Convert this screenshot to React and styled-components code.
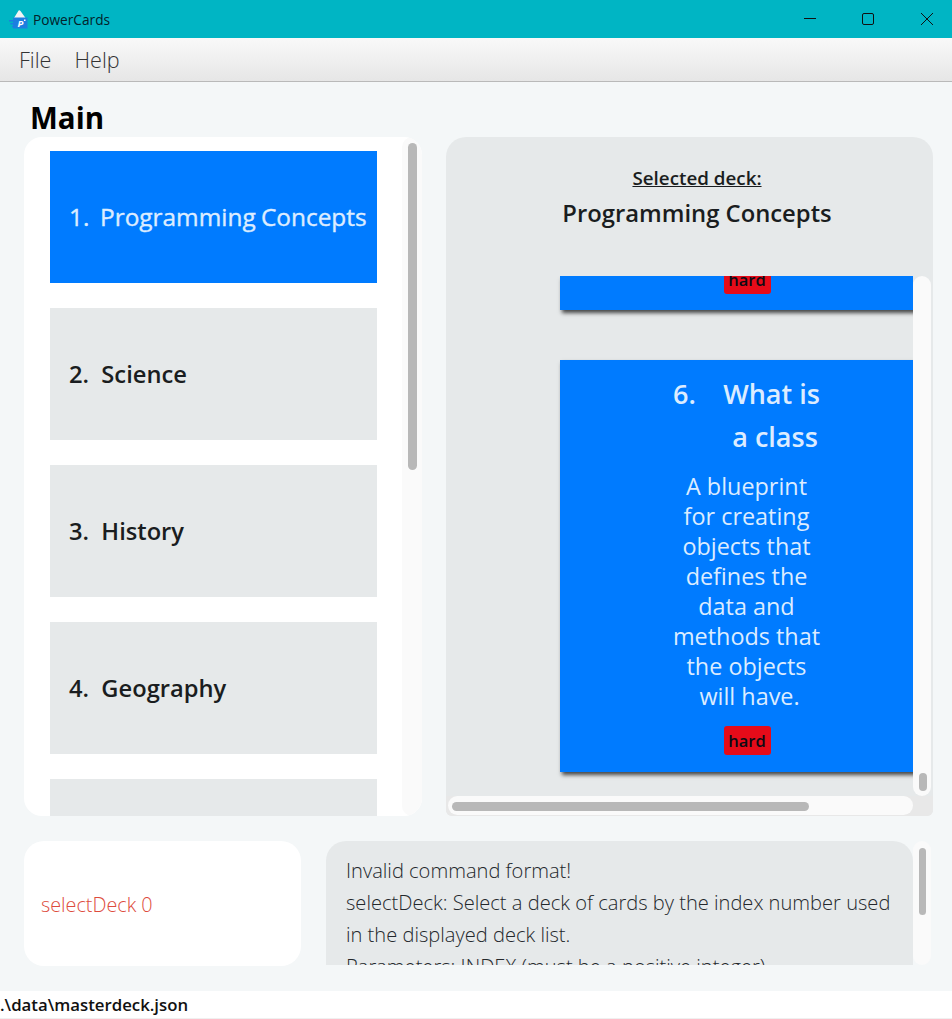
import React from "react";
import styled, { createGlobalStyle } from "styled-components";

const GlobalStyle = createGlobalStyle`
  html, body {
    margin: 0;
    padding: 0;
    background: #f4f7f8;
  }
  * {
    box-sizing: border-box;
  }
`;

const Window = styled.div`
  width: 952px;
  height: 1019px;
  display: flex;
  flex-direction: column;
  overflow: hidden;
  background: #f4f7f8;
  font-family: "Open Sans", "Noto Sans", sans-serif;
  color: #212529;
`;

const TitleBar = styled.div`
  height: 38px;
  flex: none;
  display: flex;
  align-items: center;
  background: #00b5c4;
  padding-left: 9px;
`;

const AppName = styled.span`
  margin-left: 5px;
  font-size: 13.7px;
  color: #04222a;
`;

const WindowButtons = styled.div`
  margin-left: auto;
  margin-right: -4px;
  display: flex;
`;

const WindowButton = styled.div`
  width: 58.5px;
  height: 38px;
  display: flex;
  align-items: center;
  justify-content: center;
`;

const MenuBar = styled.div`
  height: 44px;
  flex: none;
  display: flex;
  align-items: center;
  gap: 23px;
  padding: 0 0 1px 19px;
  background: linear-gradient(#f9f9f9, #e6e6e6);
  border-bottom: 1px solid #b9b9b9;
`;

const MenuItem = styled.span`
  font-size: 21.6px;
  font-weight: 300;
  color: #333;
`;

const Content = styled.div`
  flex: 1;
  display: flex;
  flex-direction: column;
  padding: 0 19px 0 24px;
`;

const Heading = styled.h1`
  margin: 0;
  height: 55px;
  padding: 14px 0 0 6px;
  font-size: 29.5px;
  line-height: 44px;
  font-weight: 700;
  color: #000;
`;

const Panels = styled.div`
  height: 679px;
  flex: none;
  display: flex;
  gap: 24px;
`;

const ListPanel = styled.div`
  width: 398px;
  display: flex;
  background: #fff;
  border-radius: 18px;
  overflow: hidden;
`;

const DeckList = styled.div`
  flex: 1;
  display: flex;
  flex-direction: column;
  gap: 25px;
  padding: 14px 0 0 26px;
  overflow: hidden;
`;

const DeckItem = styled.div`
  width: 327px;
  height: 132px;
  flex: none;
  display: flex;
  align-items: center;
  padding: 0 0 ${(p) => (p.$selected ? 2 : 0)}px 19px;
  font-size: ${(p) => (p.$selected ? 24.4 : 23.7)}px;
  font-weight: ${(p) => (p.$selected ? 400 : 600)};
  word-spacing: ${(p) => (p.$selected ? -1 : 0)}px;
  -webkit-text-stroke: ${(p) => (p.$selected ? "0.4px #dcecff" : "0")};
  white-space: pre;
  background: ${(p) => (p.$selected ? "#007bff" : "#e6e9ea")};
  color: ${(p) => (p.$selected ? "#dcecff" : "#1a1d20")};
`;

const VTrack = styled.div`
  flex: none;
  width: ${(p) => p.$width || 20}px;
  display: flex;
  flex-direction: column;
  justify-content: ${(p) => (p.$end ? "flex-end" : "flex-start")};
  padding: ${(p) => p.$padding || "6px 5px 6px 6px"};
  background: #fafafa;
  border-radius: 10px;
`;

const VThumb = styled.div`
  width: 100%;
  height: ${(p) => p.$size}px;
  background: #b8b8b8;
  border-radius: 5px;
`;

const DetailPanel = styled.div`
  width: 487px;
  display: flex;
  flex-direction: column;
  background: #e6e9ea;
  border-radius: 20px 20px 6px 6px;
  overflow: hidden;
`;

const DetailHeader = styled.div`
  height: 139px;
  flex: none;
  padding: 29px 0 0 15px;
  text-align: center;
  color: #1a1d20;
`;

const SelectedLabel = styled.div`
  font-size: 18.8px;
  line-height: 24px;
  font-weight: 600;
  text-decoration: underline;
`;

const SelectedName = styled.div`
  margin-top: 7px;
  font-size: 23.8px;
  line-height: 32px;
  font-weight: 600;
`;

const CardsRow = styled.div`
  height: 520px;
  flex: none;
  display: flex;
`;

const CardsViewport = styled.div`
  width: 467px;
  display: flex;
  flex-direction: column;
  gap: 50px;
  padding-left: 114px;
  overflow: hidden;
`;

const Card = styled.div`
  width: 374px;
  flex: none;
  display: flex;
  flex-direction: column;
  align-items: center;
  background: #007bff;
  box-shadow: 2px 3px 4px rgba(0, 0, 0, 0.7);
  color: #dcecff;
`;

const CardStub = styled(Card)`
  height: 34px;
  justify-content: flex-end;
  padding-bottom: 16px;
`;

const FullCard = styled(Card)`
  height: 412px;
  padding-top: 12px;
`;

const CardTitle = styled.div`
  width: 147px;
  margin-left: -1px;
  display: grid;
  grid-template-columns: 50px 97px;
  font-size: 27px;
  line-height: 43px;
  font-weight: 600;
`;

const CardNumber = styled.span`
  font-weight: 600;
`;

const CardQuestion = styled.span`
  text-align: center;
  white-space: pre;
`;

const CardAnswer = styled.div`
  margin: 13px 1px 0 0;
  font-size: 23.4px;
  line-height: 30px;
  font-weight: 400;
  text-align: center;
  white-space: pre;
`;

const DifficultyBadge = styled.span`
  flex: none;
  width: 47px;
  height: 29px;
  margin-top: ${(p) => p.$top || 0}px;
  display: flex;
  align-items: center;
  justify-content: center;
  background: #e60b19;
  border-radius: 3px;
  color: #0c0c14;
  font-size: 16.5px;
  font-weight: 600;
`;

const ScrollFooter = styled.div`
  height: 20px;
  flex: none;
  display: flex;
  padding-left: 2px;
  background: #e8e8e8;
  margin-bottom: 1px;
`;

const HTrack = styled.div`
  width: 465px;
  height: 19px;
  padding: 6px 104px 4px 4px;
  background: #fafafa;
  border-radius: 10px;
`;

const HThumb = styled.div`
  height: 100%;
  background: #b8b8b8;
  border-radius: 5px;
`;

const BottomRow = styled.div`
  margin-top: 25px;
  height: 125px;
  flex: none;
  display: flex;
  gap: 25px;
`;

const CommandBox = styled.div`
  width: 277px;
  display: flex;
  align-items: center;
  padding: 2px 0 0 17px;
  background: #fff;
  border-radius: 20px;
  color: #dd4b3c;
  font-size: 19.8px;
  font-weight: 300;
`;

const ResultRow = styled.div`
  height: 124px;
  display: flex;
`;

const ResultBox = styled.div`
  width: 587px;
  padding: 14px 10px 0 20px;
  background: #e6e9ea;
  border-radius: 20px 20px 0 0;
  overflow: hidden;
  font-size: 20.1px;
  line-height: 32px;
  font-weight: 300;
  color: #24282c;
  white-space: pre;
`;

const StatusBar = styled.div`
  margin-top: auto;
  height: 28px;
  flex: none;
  display: flex;
  align-items: center;
  background: #fff;
  border-bottom: 1px solid #f0f0f0;
  font-size: 16.8px;
  font-weight: 600;
  color: #111;
  white-space: pre;
`;

const decks = [
  "1.  Programming Concepts",
  "2.  Science",
  "3.  History",
  "4.  Geography",
  "",
];

const answer = [
  "A blueprint",
  "for creating",
  "objects that",
  "defines the",
  "data and",
  "methods that",
  "the objects",
  " will have.",
].join("\n");

const result = [
  "Invalid command format!",
  "selectDeck: Select a deck of cards by the index number used",
  "in the displayed deck list.",
  "Parameters: INDEX (must be a positive integer)",
].join("\n");

function AppIcon() {
  return (
    <svg width="19" height="21" viewBox="0 0 19 21">
      <path d="M5 9 L9 2.5 Q10 0.5 11.5 2 L16.5 9 Z" fill="#f2f4f5" />
      <path d="M4 8.5 H18.5 V19.5 H4 Z" fill="#1d7fe0" />
      <path d="M0 11 H6 V12.4 H0 Z M1.5 14 H7 V15.4 H1.5 Z M3 17 H7 V18.2 H3 Z" fill="#1d7fe0" />
      <text x="8.5" y="17.5" fontSize="9.5" fontWeight="700" fontStyle="italic" fill="#fff" fontFamily="Open Sans, sans-serif">P</text>
      <rect x="15" y="10.5" width="1.5" height="1.5" fill="#fff" />
    </svg>
  );
}

function MinimizeIcon() {
  return (
    <svg width="14" height="14" viewBox="0 0 14 14">
      <path d="M1 6.5 H13" stroke="#111" strokeWidth="1" fill="none" />
    </svg>
  );
}

function MaximizeIcon() {
  return (
    <svg width="14" height="14" viewBox="0 0 14 14">
      <rect x="1.5" y="1.5" width="11" height="11" rx="1.5" stroke="#111" strokeWidth="1" fill="none" />
    </svg>
  );
}

function CloseIcon() {
  return (
    <svg width="14" height="14" viewBox="0 0 14 14">
      <path d="M1 1 L13 13 M13 1 L1 13" stroke="#111" strokeWidth="1" fill="none" />
    </svg>
  );
}

export default function App() {
  return (
    <Window>
      <GlobalStyle />
      <TitleBar>
        <AppIcon />
        <AppName>PowerCards</AppName>
        <WindowButtons>
          <WindowButton><MinimizeIcon /></WindowButton>
          <WindowButton><MaximizeIcon /></WindowButton>
          <WindowButton><CloseIcon /></WindowButton>
        </WindowButtons>
      </TitleBar>
      <MenuBar>
        <MenuItem>File</MenuItem>
        <MenuItem>Help</MenuItem>
      </MenuBar>
      <Content>
        <Heading>Main</Heading>
        <Panels>
          <ListPanel>
            <DeckList>
              {decks.map((name, i) => (
                <DeckItem key={i} $selected={i === 0}>{name}</DeckItem>
              ))}
            </DeckList>
            <VTrack>
              <VThumb $size={327} />
            </VTrack>
          </ListPanel>
          <DetailPanel>
            <DetailHeader>
              <SelectedLabel>Selected deck:</SelectedLabel>
              <SelectedName>Programming Concepts</SelectedName>
            </DetailHeader>
            <CardsRow>
              <CardsViewport>
                <CardStub>
                  <DifficultyBadge>hard</DifficultyBadge>
                </CardStub>
                <FullCard>
                  <CardTitle>
                    <CardNumber>6.</CardNumber>
                    <CardQuestion>{"What is\n a class"}</CardQuestion>
                  </CardTitle>
                  <CardAnswer>{answer}</CardAnswer>
                  <DifficultyBadge $top={15}>hard</DifficultyBadge>
                </FullCard>
              </CardsViewport>
              <VTrack $end $width={18} $padding="0 4px 5px 6px">
                <VThumb $size={18} />
              </VTrack>
            </CardsRow>
            <ScrollFooter>
              <HTrack>
                <HThumb />
              </HTrack>
            </ScrollFooter>
          </DetailPanel>
        </Panels>
        <BottomRow>
          <CommandBox>selectDeck 0</CommandBox>
          <ResultRow>
            <ResultBox>{result}</ResultBox>
            <VTrack $width={18} $padding="7px 5px 0 6px">
              <VThumb $size={67} />
            </VTrack>
          </ResultRow>
        </BottomRow>
      </Content>
      <StatusBar>.\data\masterdeck.json</StatusBar>
    </Window>
  );
}
